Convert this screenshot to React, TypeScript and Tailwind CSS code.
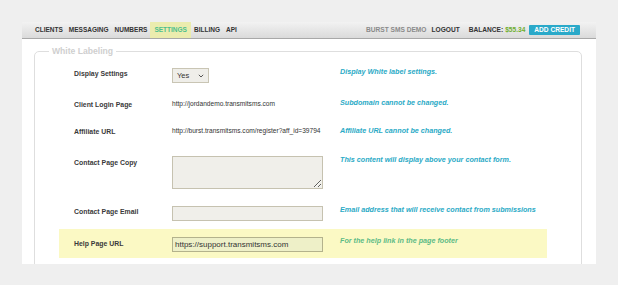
const navItems = ['CLIENTS', 'MESSAGING', 'NUMBERS', 'SETTINGS', 'BILLING', 'API']

const font = { fontFamily: '"Liberation Sans", Arial, sans-serif' }

function Row({
  h,
  highlight,
  label,
  labelTop,
  help,
  helpTop,
  children,
}: {
  h: number
  highlight?: boolean
  label: string
  labelTop: number
  help: string
  helpTop: number
  children: React.ReactNode
}) {
  return (
    <div
      className={`flex w-[488px] ${highlight ? 'bg-[#fbf9c4]' : ''}`}
      style={{ height: h }}
    >
      <div
        className="w-[113px] shrink-0 pl-[15px] text-[6.9px] leading-[10px] font-bold text-[#3a3a3a]"
        style={{ paddingTop: labelTop }}
      >
        {label}
      </div>
      <div className="w-[168px] shrink-0">{children}</div>
      <div
        className={`text-[7.2px] leading-[10px] font-bold italic ${
          highlight ? 'text-[#5dbb86]' : 'text-[#2aaac6]'
        }`}
        style={{ paddingTop: helpTop }}
      >
        {help}
      </div>
    </div>
  )
}

export default function App() {
  return (
    <div className="h-[285px] w-[618px] overflow-hidden bg-[#efefef] pt-[22px]" style={font}>
      <div className="mx-[22px] w-[574px]">
        <div className="flex h-[17px] items-stretch border-b border-[#a8a8a8] bg-gradient-to-b from-[#f2f2f2] to-[#dadada] pl-[10px] pr-[16px]">
          <div className="flex items-stretch">
            {navItems.map((item) => (
              <div
                key={item}
                className={`flex items-center px-[3px] text-[6.5px] font-bold ${
                  item === 'SETTINGS' ? 'bg-[#ebecae] px-[4px] text-[#4cbf8c]' : 'text-[#333]'
                }`}
              >
                {item}
              </div>
            ))}
          </div>
          <div className="ml-auto flex items-center text-[6.6px] font-bold">
            <span className="text-[#8a8a8a]">BURST SMS DEMO</span>
            <span className="ml-[5px] text-[#333]">LOGOUT</span>
            <span className="ml-[9px] text-[#333]">BALANCE:</span>
            <span className="ml-[2px] text-[#6fae2e]">$55.34</span>
            <span className="ml-[4px] flex h-[10px] items-center rounded-[1px] bg-[#2aa9c9] px-[5px] text-white">
              ADD CREDIT
            </span>
          </div>
        </div>
        <div className="h-[225px] overflow-hidden bg-white pt-[6px] pl-[12px] pr-[14px]">
          <fieldset className="h-[260px] rounded-[5px] border border-[#dedede]">
            <legend className="ml-[14px] px-[3px] text-[8.6px] leading-[12px] font-bold text-[#cfcfcf]">
              White Labeling
            </legend>
            <div className="ml-[24px] mt-[5px] flex flex-col">
              <Row h={28} label="Display Settings" labelTop={7} help="Display White label settings." helpTop={5}>
                <div className="mt-[6px] flex h-[15px] w-[37px] items-center justify-between border border-[#c9c5b4] bg-[#efeee9] px-[4px] text-[7.5px] text-[#333]">
                  <span>Yes</span>
                  <svg width="6" height="4" viewBox="0 0 6 4">
                    <path d="M0.8 0.8 L3 3 L5.2 0.8" fill="none" stroke="#555" strokeWidth="1" />
                  </svg>
                </div>
              </Row>
              <Row h={28} label="Client Login Page" labelTop={10} help="Subdomain cannot be changed." helpTop={8}>
                <div className="pt-[9px] text-[6.6px] leading-[10px] text-[#333]">
                  http://jordandemo.transmitsms.com
                </div>
              </Row>
              <Row h={28} label="Affiliate URL" labelTop={9} help="Affiliate URL cannot be changed." helpTop={8}>
                <div className="pt-[8px] text-[6.6px] leading-[10px] whitespace-nowrap text-[#333]">
                  http://burst.transmitsms.com/register?aff_id=39794
                </div>
              </Row>
              <Row h={50} label="Contact Page Copy" labelTop={12} help="This content will display above your contact form." helpTop={9}>
                <textarea
                  readOnly
                  className="mt-[10px] block h-[33px] w-[151px] border border-[#c6c2b0] bg-[#f0efea]"
                />
              </Row>
              <Row h={33} label="Contact Page Email" labelTop={11} help="Email address that will receive contact from submissions" helpTop={9}>
                <div className="mt-[10px] h-[15px] w-[151px] border border-[#c6c2b0] bg-[#f0efea]" />
              </Row>
              <Row h={29} highlight label="Help Page URL" labelTop={10} help="For the help link in the page footer" helpTop={7}>
                <div className="mt-[8px] flex h-[15px] w-[151px] items-center border border-[#b3b28c] bg-[#eef0c8] pl-[2px] text-[8px] text-[#333]">
                  https://support.transmitsms.com
                </div>
              </Row>
            </div>
          </fieldset>
        </div>
      </div>
    </div>
  )
}
